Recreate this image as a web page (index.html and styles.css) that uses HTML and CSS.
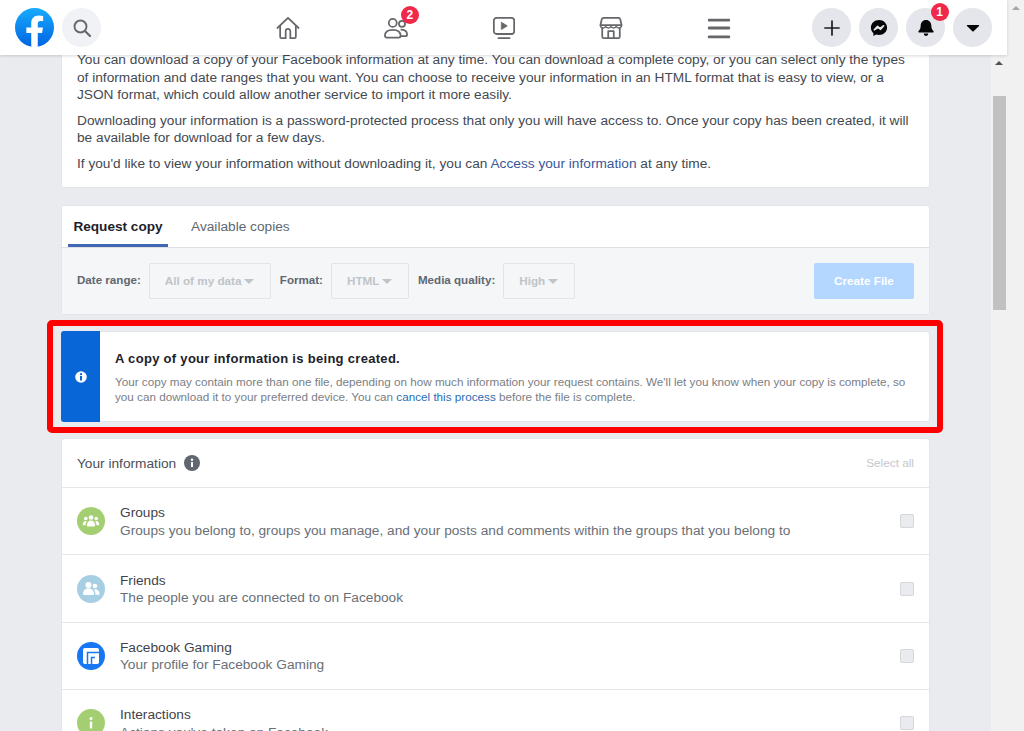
FILE: index.html
```html
<!DOCTYPE html>
<html lang="en">
<head>
<meta charset="utf-8">
<title>Download your information</title>
<link rel="stylesheet" href="styles.css">
</head>
<body>
<div class="app">
  <div class="window">
    <header class="topbar">
      <div class="topbar-left">
        <svg class="logo" viewBox="0 0 36 36"><defs><linearGradient id="fb" x1="0" y1="0" x2="0" y2="1"><stop offset="0" stop-color="#18acfe"/><stop offset="1" stop-color="#0163e0"/></linearGradient></defs><circle cx="18" cy="18" r="18" fill="url(#fb)"/><path fill="#fff" d="M25 23l.8-5H21v-3.500c0-1.400.5-2.500 2.700-2.500H26V7.400c-1.300-.2-2.700-.4-4-.4-4.100 0-7 2.500-7 7v4h-4.500v5H15v12.700c1 .2 2 .3 3 .3s2-.1 3-.3V23h4z"/></svg>
        <div class="round round-light">
          <svg class="ico-20" viewBox="0 0 20 20"><circle cx="8.500" cy="8.500" r="6" fill="none" stroke="#65676b" stroke-width="1.900"/><path d="M13 13l5 5" stroke="#65676b" stroke-width="2.200" stroke-linecap="round"/></svg>
        </div>
      </div>
      <nav class="topnav">
        <div class="navitem">
          <svg class="ico-nav" viewBox="0 0 26 26" fill="none" stroke="#65676b" stroke-width="1.900" stroke-linejoin="round" stroke-linecap="round"><path d="M1.500 13L13 2l11.500 11"/><path d="M4.500 11v11.500a1.500 1.500 0 0 0 1.500 1.500h4.500v-7.500a2.500 2.500 0 0 1 5 0V24H20a1.500 1.500 0 0 0 1.500-1.500V11"/></svg>
        </div>
        <div class="navitem">
          <span class="navicon">
            <svg class="ico-nav" viewBox="0 0 26 26" fill="none" stroke="#65676b" stroke-width="1.900" stroke-linejoin="round"><circle cx="9.500" cy="7.500" r="4.300"/><circle cx="19.500" cy="8.500" r="3.300"/><path d="M1 21.500c0-4.500 3.500-6.500 8.500-6.500s8.500 2 8.500 6.500c0 1.200-.8 1.800-2 1.800H3c-1.200 0-2-.6-2-1.800z"/><path d="M18 14.800c4 0 7 1.500 7 5.200 0 1.200-.7 1.800-1.800 1.800H18"/></svg>
            <span class="badge">2</span>
          </span>
        </div>
        <div class="navitem">
          <svg class="ico-nav" viewBox="0 0 26 26" fill="none" stroke="#65676b" stroke-width="1.900" stroke-linecap="round"><rect x="2" y="2" width="22" height="17.500" rx="3"/><path d="M7 24h12"/><path d="M10.500 7l6 3.700-6 3.700z" fill="#65676b" stroke-width="1" stroke-linejoin="round"/></svg>
        </div>
        <div class="navitem">
          <svg class="ico-nav" viewBox="0 0 26 26" fill="none" stroke="#65676b" stroke-width="1.900" stroke-linejoin="round"><path d="M5 2h16a2 2 0 0 1 2 1.600L24.500 10H1.500L3 3.600A2 2 0 0 1 5 2z"/><path d="M1.500 10c0 2 1.500 3 3 3 1.300 0 2.500-.8 2.800-2 .3 1.200 1.500 2 2.900 2s2.500-.8 2.800-2c.3 1.200 1.400 2 2.800 2s2.600-.8 2.900-2c.3 1.200 1.500 2 2.800 2 1.500 0 3-1 3-3" stroke-width="1.400"/><path d="M3.500 13v9.500a1.500 1.500 0 0 0 1.500 1.500h16a1.500 1.500 0 0 0 1.500-1.500V13"/><path d="M10 24v-7.500h6V24"/></svg>
        </div>
        <div class="navitem">
          <svg class="ico-nav" viewBox="0 0 26 26" fill="#65676b"><rect x="1" y="3" width="24" height="3" rx="1"/><rect x="1" y="11.500" width="24" height="3" rx="1"/><rect x="1" y="21" width="24" height="3" rx="1"/></svg>
        </div>
      </nav>
      <div class="topbar-right">
        <div class="round round-dark">
          <svg class="ico-16" viewBox="0 0 16 16"><path d="M8 1v14M1 8h14" stroke="#1c1e21" stroke-width="1.700" stroke-linecap="round"/></svg>
        </div>
        <div class="round round-dark">
          <svg class="ico-18" viewBox="0 0 20 20"><path fill="#050505" d="M10 1C4.900 1 1 4.700 1 9.500c0 2.500 1 4.700 2.800 6.200v3.300l3-1.700c1 .3 2.100.5 3.200.5 5.100 0 9-3.700 9-8.300S15.100 1 10 1z"/><path fill="none" stroke="#e4e6eb" stroke-width="1.700" stroke-linejoin="round" d="M4.800 12l3.600-4 2.600 2.300L15.200 7.500l-3.400 4-2.800-2.200z"/></svg>
        </div>
        <div class="round round-dark">
          <span class="navicon">
            <svg class="ico-20" viewBox="0 0 20 20"><path fill="#050505" d="M10 2c-3.300 0-5.300 2.500-5.300 5.500 0 3.100-1 4.300-2.100 5.500-.6.600-.2 1.600.7 1.600h13.400c.9 0 1.300-1 .7-1.600-1.100-1.200-2.100-2.400-2.100-5.500C15.300 4.500 13.300 2 10 2z"/><path fill="#050505" d="M7.700 15.600h4.600a2.300 2.300 0 0 1-4.600 0z"/></svg>
            <span class="badge badge-bell">1</span>
          </span>
        </div>
        <div class="round round-dark">
          <svg class="ico-16" viewBox="0 0 16 16"><path fill="#050505" d="M2.500 5h11c.6 0 .9.700.5 1.100L8.600 11.300a.9.900 0 0 1-1.200 0L2 6.100C1.600 5.700 1.900 5 2.500 5z"/></svg>
        </div>
      </div>
    </header>
    <div class="viewport">
      <main class="content">
        <section class="card intro">
          <p class="intro-p">You can download a copy of your Facebook information at any time. You can download a complete copy, or you can select only the types of information and date ranges that you want. You can choose to receive your information in an HTML format that is easy to view, or a JSON format, which could allow another service to import it more easily.</p>
          <p class="intro-p">Downloading your information is a password-protected process that only you will have access to. Once your copy has been created, it will be available for download for a few days.</p>
          <p class="intro-p">If you'd like to view your information without downloading it, you can <a class="link" href="#">Access your information</a> at any time.</p>
        </section>

        <section class="card request">
          <div class="tabs">
            <div class="tab tab-active">Request copy</div>
            <div class="tab">Available copies</div>
          </div>
          <div class="controls">
            <span class="ctl-label">Date range:</span>
            <span class="select select-date">All of my data<i class="caret"></i></span>
            <span class="ctl-label">Format:</span>
            <span class="select select-format">HTML<i class="caret"></i></span>
            <span class="ctl-label">Media quality:</span>
            <span class="select select-media">High<i class="caret"></i></span>
            <span class="create">Create File</span>
          </div>
        </section>

        <section class="card notice">
          <div class="notice-strip">
            <svg class="ico-12" viewBox="0 0 12 12"><circle cx="6" cy="6" r="5.800" fill="#fff"/><rect x="5" y="5" width="2" height="4.500" fill="#0866d6"/><circle cx="6" cy="3.200" r="1.100" fill="#0866d6"/></svg>
          </div>
          <div class="notice-body">
            <h2 class="notice-title">A copy of your information is being created.</h2>
            <p class="notice-text">Your copy may contain more than one file, depending on how much information your request contains. We'll let you know when your copy is complete, so you can download it to your preferred device. You can <a class="notice-link" href="#">cancel this process</a> before the file is complete.</p>
          </div>
          <div class="highlight"></div>
        </section>

        <section class="card info">
          <div class="info-head">
            <span class="info-title">Your information</span>
            <svg class="ico-16" viewBox="0 0 16 16"><circle cx="8" cy="8" r="8" fill="#606770"/><rect x="7" y="7" width="2" height="5" fill="#fff"/><circle cx="8" cy="4.700" r="1.200" fill="#fff"/></svg>
            <span class="select-all">Select all</span>
          </div>
          <div class="row">
            <svg class="row-icon" viewBox="0 0 28 28"><circle cx="14" cy="14" r="14" fill="#a3ce71"/><g fill="#fff"><circle cx="14" cy="10.500" r="2.300"/><circle cx="8.800" cy="11.500" r="1.800"/><circle cx="19.200" cy="11.500" r="1.800"/><path d="M9.800 18.500c0-3 1.800-5 4.200-5s4.200 2 4.200 5c0 .6-.4.900-1 .9h-6.400c-.6 0-1-.3-1-.9z"/><path d="M8.500 18.200H6.500c-.5 0-.8-.3-.8-.8 0-2 1.300-3.500 3-3.500.5 0 .9.100 1.200.300-.8 1-1.300 2.400-1.400 4z"/><path d="M19.500 18.200h2c.5 0 .8-.3.800-.8 0-2-1.300-3.500-3-3.500-.5 0-.9.100-1.200.300.8 1 1.300 2.400 1.400 4z"/></g></svg>
            <div class="row-text"><div class="row-title">Groups</div><div class="row-sub">Groups you belong to, groups you manage, and your posts and comments within the groups that you belong to</div></div>
            <span class="check"></span>
          </div>
          <div class="row">
            <svg class="row-icon" viewBox="0 0 28 28"><circle cx="14" cy="14" r="14" fill="#a7cfe3"/><g fill="#fff"><circle cx="11.500" cy="10" r="3"/><circle cx="18" cy="11" r="2.300"/><path d="M6 19c0-3.500 2.300-5.800 5.500-5.800S17 15.500 17 19c0 .7-.4 1-1 1H7c-.6 0-1-.3-1-1z"/><path d="M18.500 19.800h3c.6 0 1-.4 1-1 0-2.600-1.900-4.500-4.300-4.500-.5 0-.9.100-1.300.200 1 1.300 1.600 3 1.600 5.300z"/></g></svg>
            <div class="row-text"><div class="row-title">Friends</div><div class="row-sub">The people you are connected to on Facebook</div></div>
            <span class="check"></span>
          </div>
          <div class="row">
            <svg class="row-icon" viewBox="0 0 28 28"><circle cx="14" cy="14" r="14" fill="#1877f2"/><rect x="6" y="6" width="16" height="16" rx="1.800" fill="#fff"/><path fill="none" stroke="#1877f2" stroke-width="1.500" d="M22 10.500H10.500V22M14.500 22V15.500H18"/></svg>
            <div class="row-text"><div class="row-title">Facebook Gaming</div><div class="row-sub">Your profile for Facebook Gaming</div></div>
            <span class="check"></span>
          </div>
          <div class="row">
            <svg class="row-icon" viewBox="0 0 28 28"><circle cx="14" cy="14" r="14" fill="#a3ce71"/><circle cx="14" cy="9.500" r="1.500" fill="#fff"/><rect x="12.800" y="12.500" width="2.400" height="7" rx=".5" fill="#fff"/></svg>
            <div class="row-text"><div class="row-title">Interactions</div><div class="row-sub">Actions you've taken on Facebook</div></div>
            <span class="check"></span>
          </div>
        </section>
      </main>
      <div class="scrollbar-inner">
        <i class="arrow-up arrow-dark"></i>
        <div class="thumb"></div>
      </div>
    </div>
  </div>
  <div class="scrollbar-outer"><i class="arrow-up arrow-light"></i></div>
</div>
</body>
</html>
```
FILE: styles.css
```css
* { box-sizing: border-box; }
html, body { margin: 0; height: 100%; overflow: hidden; }
body { font-family: "Liberation Sans", Arial, sans-serif; color: #1d2129; background: #e9ebee; }

.app { display: flex; width: 1024px; height: 731px; overflow: hidden; }
.window { width: 1007px; display: flex; flex-direction: column; }
.scrollbar-outer { width: 17px; background: #f1f1f1; display: flex; justify-content: center; padding-top: 6px; }

.topbar {
  height: 55px; flex: none; background: #fff; position: relative; z-index: 5;
  display: grid; grid-template-columns: 1fr auto 1fr; align-items: center;
  padding: 0 15px; box-shadow: 0 1px 3px rgba(0,0,0,.15);
}
.topbar-left { display: flex; align-items: center; gap: 8px; }
.topbar-right { display: flex; align-items: center; justify-content: flex-end; gap: 8px; }
.logo { width: 39px; height: 39px; display: block; }
.round { width: 39px; height: 39px; border-radius: 50%; display: flex; align-items: center; justify-content: center; }
.round-light { background: #f0f2f5; }
.round-dark { background: #e4e6eb; }
.ico-12 { width: 12px; height: 12px; display: block; }
.ico-16 { width: 16px; height: 16px; display: block; flex: none; }
.ico-18 { width: 18px; height: 18px; display: block; }
.ico-20 { width: 20px; height: 20px; display: block; }
.ico-nav { width: 24px; height: 24px; display: block; }

.topnav { display: flex; }
.navitem { width: 107.75px; height: 55px; display: flex; align-items: center; justify-content: center; }
.navicon { position: relative; display: block; }
.badge {
  position: absolute; top: -10px; right: -11px; width: 18px; height: 18px; border-radius: 50%;
  background: #f02849; color: #fff; font-size: 12px; font-weight: 700; line-height: 18px; text-align: center;
}
.badge-bell { top: -15px; right: -13px; }

.viewport { flex: 1; min-height: 0; display: flex; }
.content { width: 991px; flex: none; padding: 0 61px; overflow: hidden; }
.scrollbar-inner { flex: 1; background: #f1f1f1; display: flex; flex-direction: column; align-items: center; padding-top: 6px; }
.thumb { width: 13px; height: 214px; margin-top: 31px; background: #c1c1c1; margin-left: 1px; }
.arrow-up { display: block; width: 0; height: 0; border-left: 4px solid transparent; border-right: 4px solid transparent; border-bottom: 4px solid #505050; }
.arrow-light { border-bottom-color: #a3a3a3; }

.card { background: #fff; border: 1px solid #e3e5e8; border-radius: 3px; width: 869px; }

.intro { margin-top: -5px; padding: 0 15px 15px; }
.intro-p { margin: 0 0 8px; font-size: 13.7px; line-height: 17.5px; color: #444950; }
.intro-p:last-child { margin-bottom: 0; }
.link { color: #385898; text-decoration: none; }

.request { margin-top: 17px; }
.tabs { display: flex; height: 42px; padding: 0 6px; gap: 17px; border-bottom: 1px solid #dddfe2; background: #fff; border-radius: 3px 3px 0 0; }
.tab { padding: 0 6px; height: 41px; line-height: 41px; font-size: 13.7px; color: #606770; }
.tab-active { font-weight: 700; color: #1d2129; border-bottom: 3px solid #4267b2; width: 100px; text-align: center; white-space: nowrap; font-size: 13.6px; padding: 0; }
.controls { height: 66px; background: #f5f6f7; display: flex; align-items: center; padding: 0 15px; font-size: 11.7px; }
.ctl-label { font-weight: 700; font-size: 11.6px; color: #606770; margin: 0 8px 3px 0; white-space: nowrap; }
.ctl-label + .select-format { margin-left: 0; }
.select {
  height: 36px; border: 1px solid #e2e4e7; border-radius: 2px; color: #c0c4c9; font-weight: 700; white-space: nowrap;
  padding: 0 15px 1px; margin-right: 9px; display: flex; align-items: center; background: #f5f6f7;
}
.select-date { width: 122px; }
.select-format { width: 78px; }
.select-media { width: 72px; }
.caret { display: block; flex: none; margin-left: 3px; margin-top: 1px; width: 0; height: 0; border-left: 5px solid transparent; border-right: 5px solid transparent; border-top: 5px solid #c0c4c9; }
.create { margin-left: auto; width: 100px; height: 36px; line-height: 36px; text-align: center; background: #b3d7ff; border-radius: 2px; color: #fff; font-weight: 700; }

.notice { margin-top: 16px; height: 91px; display: flex; position: relative; }
.notice-strip { width: 39px; margin: -1px 0 -1px -1px; background: #0866d6; border-radius: 3px 0 0 3px; display: flex; align-items: center; justify-content: center; }
.notice-body { flex: 1; padding: 19px 15px 0 15px; }
.notice-title { margin: 0 0 7px; font-size: 13px; line-height: 16px; font-weight: 700; color: #1d2129; letter-spacing: .3px; }
.notice-text { margin: 0; font-size: 11.7px; line-height: 15px; color: #7a7e85; }
.notice-link { color: #2a6db5; text-decoration: none; }
.highlight { position: absolute; top: -12px; bottom: -12px; left: -15px; right: -14px; border: 6px solid #ff0000; border-radius: 5px; pointer-events: none; }

.info { margin-top: 16px; border-bottom: 0; }
.info-head { height: 48px; display: flex; align-items: center; padding: 0 15px; }
.info-title { font-size: 13.7px; color: #4b4f56; margin-right: 8px; }
.select-all { margin-left: auto; font-size: 11.8px; color: #c4c7cc; }
.row { height: 67.4px; border-top: 1px solid #e6e7ea; display: flex; align-items: center; padding: 0 15px; }
.row-icon { width: 28px; height: 28px; flex: none; display: block; margin-right: 15px; }
.row-text { flex: 1; font-size: 13.7px; line-height: 17.5px; padding-top: 1px; }
.row-title { color: #3f4349; }
.row-sub { color: #6a6f77; }
.check { width: 14px; height: 14px; flex: none; border: 1px solid #d5d7db; border-radius: 2px; background: #e9ebee; }
```
